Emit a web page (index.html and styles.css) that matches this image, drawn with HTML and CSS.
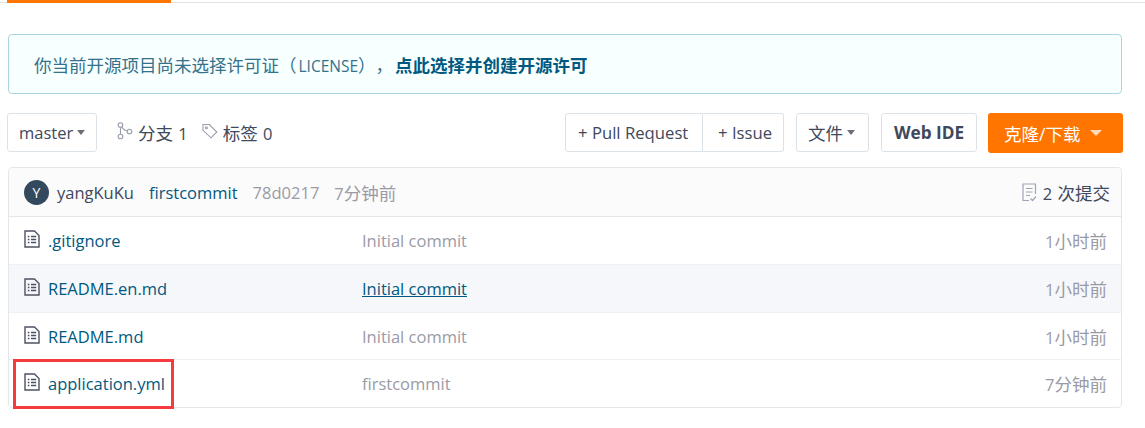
FILE: index.html
```html
<!DOCTYPE html>
<html>
  <head>
    <title>Project files</title>
    <link rel="stylesheet" href="styles.css">
  </head>
  <body>
    <div class="tabs-line"><div class="tab-active"></div></div>
    <div class="license-tip">
      <span class="cjk">你当前开源项目尚未选择许可证（<span class="license-word">LICENSE</span>），</span>
      <a class="license-link cjk">点此选择并创建开源许可</a>
    </div>
    <div class="toolbar">
      <div class="btn branch-btn">master<i class="caret"></i></div>
      <div class="ref-count">
        <svg class="ref-icon" width="16" height="18" viewBox="0 0 16 18"><circle cx="3.5" cy="3" r="2.3"/><circle cx="3.5" cy="14.5" r="2.3"/><circle cx="12.5" cy="9.5" r="2.3"/><path d="M3.5 5.3v7M4.8 4.8c1 2.6 3.6 3.6 5.5 4.2"/></svg>
        <span><span class="cjk">分支</span> 1</span>
      </div>
      <div class="ref-count">
        <svg class="ref-icon" width="16" height="16" viewBox="0 0 16 16"><path d="M1 1.5h6.3l7.5 7.5-5.8 5.8L1 7.3z"/><circle cx="4.4" cy="4.8" r="1"/></svg>
        <span><span class="cjk">标签</span> 0</span>
      </div>
      <div class="spacer"></div>
      <div class="btn-group">
        <div class="btn">+ Pull Request</div>
        <div class="btn">+ Issue</div>
      </div>
      <div class="btn file-btn"><span class="cjk">文件</span><i class="caret"></i></div>
      <div class="btn ide-btn">Web IDE</div>
      <div class="clone-btn"><span class="cjk">克隆/下载</span><i class="caret"></i></div>
    </div>
    <div class="file-table">
      <div class="commit-row">
        <div class="avatar">Y</div>
        <span class="author">yangKuKu</span>
        <a class="commit-msg">firstcommit</a>
        <span class="muted">78d0217</span>
        <span class="muted">7<span class="cjk">分钟前</span></span>
        <div class="spacer"></div>
        <svg class="commit-icon" width="15" height="19" viewBox="0 0 15 19"><path d="M13.5 11V1H1v16.5h6"/><path d="M4 5.5h6.5M4 9h6.5M4 12.5h4M8.5 15.5l2 2 3.5-4"/></svg>
        <span class="commit-count">2 <span class="cjk">次提交</span></span>
      </div>
      <div class="file-row">
        <svg class="file-icon" width="16" height="18" viewBox="0 0 16 18"><path d="M1 1h9.5L15 5.5V17H1z"/><path d="M3.8 6.5h1.6M7 6.5h5.2M3.8 9.5h1.6M7 9.5h5.2M3.8 12.5h1.6M7 12.5h5.2"/></svg>
        <a class="file-name">.gitignore</a>
        <span class="file-commit">Initial commit</span>
        <span class="file-time">1<span class="cjk">小时前</span></span>
      </div>
      <div class="file-row hovered">
        <svg class="file-icon" width="16" height="18" viewBox="0 0 16 18"><path d="M1 1h9.5L15 5.5V17H1z"/><path d="M3.8 6.5h1.6M7 6.5h5.2M3.8 9.5h1.6M7 9.5h5.2M3.8 12.5h1.6M7 12.5h5.2"/></svg>
        <a class="file-name">README.en.md</a>
        <span class="file-commit">Initial commit</span>
        <span class="file-time">1<span class="cjk">小时前</span></span>
      </div>
      <div class="file-row short">
        <svg class="file-icon" width="16" height="18" viewBox="0 0 16 18"><path d="M1 1h9.5L15 5.5V17H1z"/><path d="M3.8 6.5h1.6M7 6.5h5.2M3.8 9.5h1.6M7 9.5h5.2M3.8 12.5h1.6M7 12.5h5.2"/></svg>
        <a class="file-name">README.md</a>
        <span class="file-commit">Initial commit</span>
        <span class="file-time">1<span class="cjk">小时前</span></span>
      </div>
      <div class="file-row">
        <svg class="file-icon" width="16" height="18" viewBox="0 0 16 18"><path d="M1 1h9.5L15 5.5V17H1z"/><path d="M3.8 6.5h1.6M7 6.5h5.2M3.8 9.5h1.6M7 9.5h5.2M3.8 12.5h1.6M7 12.5h5.2"/></svg>
        <a class="file-name">application.yml</a>
        <span class="file-commit">firstcommit</span>
        <span class="file-time">7<span class="cjk">分钟前</span></span>
        <div class="red-box"></div>
      </div>
    </div>
  </body>
</html>
```

FILE: styles.css
```css
html, body {
  margin: 0;
  padding: 0;
}
body {
  width: 1145px;
  height: 428px;
  overflow: hidden;
  background-color: #fff;
  color: #40485b;
  font-family: "Open Sans", "Noto Sans CJK SC", sans-serif;
  font-size: 16.5px;
  text-spacing-trim: space-all;
}
.cjk {
  font-size: 17.5px;
}
.tabs-line {
  height: 3px;
  background: linear-gradient(#fff 2px, #e3e3e3 2px);
  box-sizing: border-box;
  padding-left: 7px;
}
.tab-active {
  width: 164px;
  height: 3px;
  background-color: #ff7500;
}
.license-tip {
  margin: 31px 23px 0 8px;
  height: 60px;
  box-sizing: border-box;
  padding-left: 25px;
  display: flex;
  align-items: center;
  background-color: #f7ffff;
  border: 1px solid #a9d5de;
  border-radius: 4px;
  color: #34718a;
}
.license-word {
  font-size: 15.5px;
  margin-left: 2px;
}
.license-link {
  margin-left: 2px;
  font-weight: 700;
  color: #005980;
}
.toolbar {
  display: flex;
  align-items: flex-start;
  margin: 19px 22px 0 7px;
  height: 40px;
}
.btn {
  height: 39px;
  box-sizing: border-box;
  padding: 0 11px;
  display: flex;
  align-items: center;
  background-color: #fff;
  border: 1px solid #dce3e8;
  border-radius: 3px;
  white-space: nowrap;
}
.caret {
  display: inline-block;
  margin-left: 4px;
  border-top: 5px solid #6b6e75;
  border-left: 4px solid transparent;
  border-right: 4px solid transparent;
}
.branch-btn {
  width: 90px;
}
.ref-count {
  display: flex;
  align-items: center;
  height: 39px;
  margin-left: 20px;
  gap: 5px;
  word-spacing: 1px;
}
.ref-count + .ref-count {
  margin-left: 14px;
}
.ref-icon {
  fill: none;
  stroke: #9a9eaa;
  stroke-width: 1.1;
  margin-top: -3px;
}
.spacer {
  flex: 1;
}
.btn-group {
  display: flex;
  font-size: 16.7px;
}
.btn-group .btn:first-child {
  border-radius: 3px 0 0 3px;
  width: 138px;
  padding-left: 12px;
}
.btn-group .btn:last-child {
  border-left: none;
  border-radius: 0 3px 3px 0;
  width: 81px;
  padding-left: 15px;
  padding-right: 0;
}
.file-btn {
  margin-left: 12px;
  width: 73px;
}
.ide-btn {
  margin-left: 12px;
  width: 96px;
  padding-left: 12px;
  font-weight: 700;
  font-size: 17.2px;
}
.clone-btn {
  margin-left: 11px;
  width: 135px;
  height: 40px;
  box-sizing: border-box;
  padding-left: 16px;
  display: flex;
  align-items: center;
  background-color: #ff7500;
  border-radius: 3px;
  color: #fff;
}
.clone-btn .caret {
  margin-left: 10px;
  border-top: 6px solid #ffd9b8;
  border-left: 6px solid transparent;
  border-right: 6px solid transparent;
}
.file-table {
  margin: 14px 23px 0 8px;
  border: 1px solid #e3e7ec;
  border-radius: 4px;
}
.commit-row {
  display: flex;
  align-items: center;
  height: 48px;
  padding: 0 11px 0 15px;
  background-color: #fbfbfc;
  border-bottom: 1px solid #e3e7ec;
  border-radius: 4px 4px 0 0;
}
.avatar {
  width: 25px;
  height: 25px;
  margin-right: 8px;
  border-radius: 50%;
  background-color: #34495e;
  color: #fff;
  font-size: 14px;
  line-height: 25px;
  text-align: center;
}
.author {
  margin-right: 15px;
}
.commit-msg {
  color: #005980;
  margin-right: 15px;
}
.muted {
  color: #9a9aa5;
  margin-right: 15px;
}
.commit-icon {
  fill: none;
  stroke: #9ea5b5;
  stroke-width: 1.2;
  margin-right: 6px;
}
.commit-count {
  word-spacing: 1px;
}
.file-row {
  position: relative;
  display: flex;
  align-items: center;
  height: 47px;
  padding: 0 14px 0 15px;
  border-bottom: 1px solid #eef0f3;
}
.file-row.short {
  height: 45px;
  padding-top: 1px;
}
.file-row:last-child {
  height: 46px;
  padding-bottom: 1px;
  border-bottom: none;
}
.file-row.hovered {
  background-color: #f6f7fb;
}
.file-row.hovered .file-commit {
  color: #005980;
  text-decoration: underline;
}
.file-icon {
  fill: none;
  stroke: #4d5263;
  stroke-width: 1.4;
  margin-top: -3px;
  margin-right: 8px;
}
.file-name {
  width: 314px;
  color: #005980;
}
.file-commit {
  color: #9a9aa5;
}
.file-time {
  margin-left: auto;
  color: #9a9aa5;
}
.red-box {
  position: absolute;
  left: 4px;
  top: -1px;
  width: 161px;
  height: 50px;
  box-sizing: border-box;
  border: 3px solid #f63b3f;
}
```
